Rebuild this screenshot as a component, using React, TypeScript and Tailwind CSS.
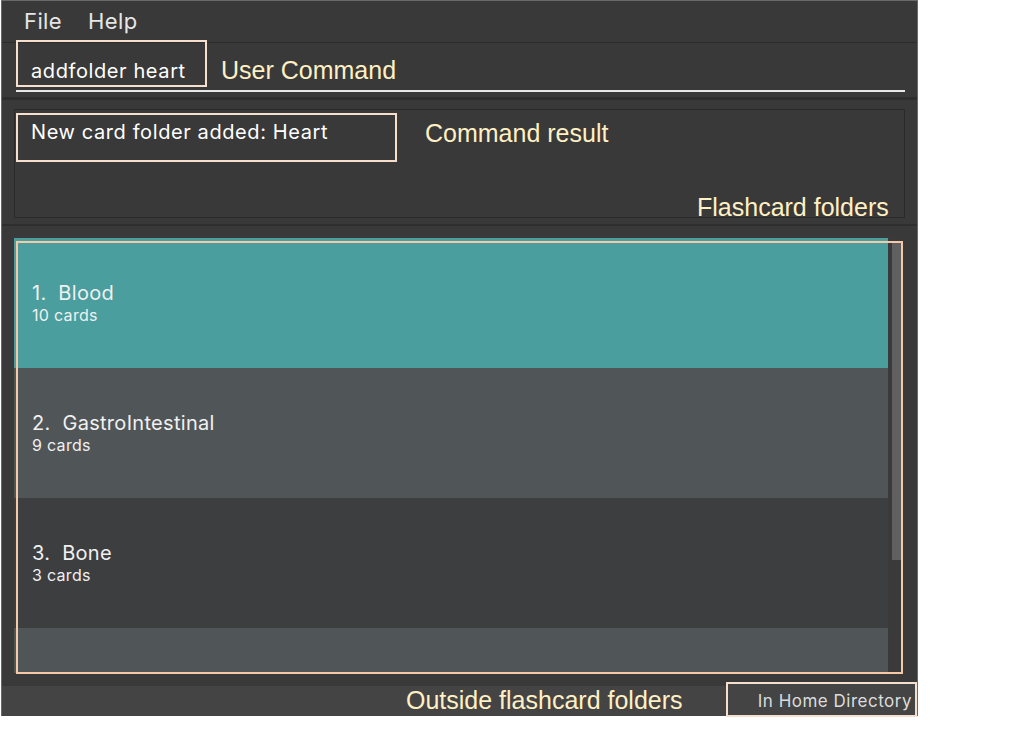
import React from "react";

const folders = [
  { n: 1, name: "Blood", cards: "10 cards", bg: "bg-[#4a9e9e]" },
  { n: 2, name: "GastroIntestinal", cards: "9 cards", bg: "bg-[#505558]" },
  { n: 3, name: "Bone", cards: "3 cards", bg: "bg-[#3d3e40]" },
  { n: 4, name: "", cards: "", bg: "bg-[#505558]" },
];

export default function App() {
  const app = { fontFamily: "Inter, 'Open Sans', sans-serif" };
  const note = { fontFamily: "'Liberation Sans', Arial, sans-serif" };
  return (
    <div className="relative w-[1012px] h-[729px] bg-white overflow-hidden" style={app}>
      <div className="ml-[1px] w-[917px] h-[716px] bg-[#393939] border-x border-t border-[#6a6a6a] flex flex-col">
        {/* menu */}
        <div className="h-[42px] flex items-center pl-[22px] gap-[26px] text-[22px] tracking-[0.4px] text-[#e6e6e6] border-b border-[#2c2c2c] shrink-0">
          <span>File</span>
          <span>Help</span>
        </div>
        {/* command */}
        <div className="h-[57px] px-[14px] flex flex-col border-b-[3px] border-[#2e2e2e] shrink-0">
          <div className="flex-1 flex items-center pl-[15px] pt-[8px] text-[20px] tracking-[0.6px] text-white">addfolder heart</div>
          <div className="h-[2px] bg-[#e8e8e8] mb-[5px] mr-[-2px]" />
        </div>
        {/* result */}
        <div className="h-[126px] px-[12px] pt-[9px] pb-[6px] border-b-[2px] border-[#2e2e2e] shrink-0">
          <div className="h-full border border-[#2a2a2a] bg-[#393939] pl-[16px] pt-[7px] text-[20px] tracking-[0.6px] text-white">
            New card folder added: Heart
          </div>
        </div>
        {/* list */}
        <div className="flex-1 pl-[12px] pr-[16px] pt-[12px] pb-[13px] flex flex-col min-h-0">
          <div className="flex-1 flex min-h-0 overflow-hidden">
            <div className="flex-1 flex flex-col">
              {folders.map((f) => (
                <div key={f.n} className={`h-[130px] shrink-0 ${f.bg} pl-[18px] flex flex-col justify-center text-[#f0f0f0]`}>
                  {f.name && (
                    <>
                      <div className="text-[20px] leading-[24px] tracking-[0.3px]">
                        {f.n}.&nbsp;&nbsp;{f.name}
                      </div>
                      <div className="text-[16px] leading-[20px] tracking-[0.3px]">{f.cards}</div>
                    </>
                  )}
                </div>
              ))}
            </div>
            <div className="w-[13px] bg-[#3a3a3a] pt-[5px] pl-[4px]">
              <div className="h-[317px] bg-[#606060]" />
            </div>
          </div>
        </div>
        {/* status */}
        <div className="h-[30px] bg-[#444444] shrink-0" />
      </div>

      {/* annotation overlays */}
      <div className="absolute left-[16px] top-[40px] w-[191px] h-[47px] border-2 border-[#f7dfcd]" />
      <div className="absolute left-[221px] top-[55px] text-[25px] leading-[30px] text-[#fff0c4]" style={note}>User Command</div>
      <div className="absolute left-[16px] top-[113px] w-[381px] h-[49px] border-2 border-[#f7dfcd]" />
      <div className="absolute left-[425px] top-[118px] text-[25px] leading-[30px] text-[#fff0c4]" style={note}>Command result</div>
      <div className="absolute left-[697px] top-[192px] text-[25px] leading-[30px] text-[#fff0c4]" style={note}>Flashcard folders</div>
      <div className="absolute left-[16px] top-[241px] w-[887px] h-[433px] border-2 border-[#f5c9a8]" />
      <div className="absolute left-[406px] top-[685px] text-[25px] leading-[30px] text-[#fff0c4]" style={note}>Outside flashcard folders</div>
      <div className="absolute left-[726px] top-[682px] w-[191px] h-[35px] border-2 border-[#f7dfcd] bg-[#444444] flex items-center justify-end pr-[3px] pt-[5px] text-[17px] tracking-[0.5px] text-[#dcdcdc]">
        In Home Directory
      </div>
    </div>
  );
}
